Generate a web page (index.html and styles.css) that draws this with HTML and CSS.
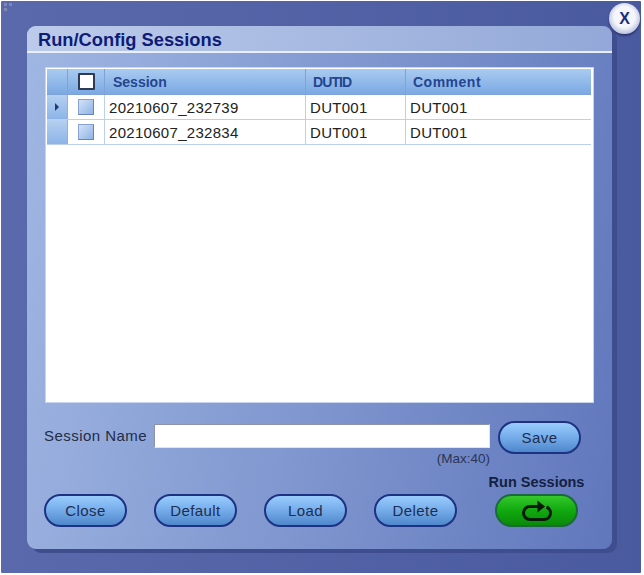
FILE: index.html
```html
<!DOCTYPE html>
<html lang="en">
<head>
<meta charset="utf-8">
<title>Run/Config Sessions</title>
<link rel="stylesheet" href="styles.css">
</head>
<body>
<div class="window">
  <svg class="grip" width="12" height="10" viewBox="0 0 12 10"><path d="M1 1h3v3H1zM6 1h3v3H6zM1 6h3v3H1z" fill="#7f88b4"/></svg>
  <button class="close-x">X</button>
  <section class="panel">
    <h1 class="title">Run/Config Sessions</h1>
    <div class="content">
      <div class="grid-box">
        <div class="row head">
          <div class="cell rowhead"></div>
          <div class="cell check"><span class="box"></span></div>
          <div class="cell session">Session</div>
          <div class="cell dutid">DUTID</div>
          <div class="cell comment">Comment</div>
        </div>
        <div class="row">
          <div class="cell rowhead"><svg width="6" height="8" viewBox="0 0 6 8"><path d="M1 0l4 4-4 4z" fill="#1f3a78"/></svg></div>
          <div class="cell check"><span class="tick"></span></div>
          <div class="cell session">20210607_232739</div>
          <div class="cell dutid">DUT001</div>
          <div class="cell comment">DUT001</div>
        </div>
        <div class="row">
          <div class="cell rowhead"></div>
          <div class="cell check"><span class="tick"></span></div>
          <div class="cell session">20210607_232834</div>
          <div class="cell dutid">DUT001</div>
          <div class="cell comment">DUT001</div>
        </div>
      </div>
      <div class="name-row">
        <label class="name-label" for="session-name">Session Name</label>
        <div class="name-field">
          <input class="name-input" id="session-name" type="text">
          <span class="max">(Max:40)</span>
        </div>
        <button class="pill save">Save</button>
      </div>
      <div class="actions">
        <button class="pill">Close</button>
        <button class="pill">Default</button>
        <button class="pill">Load</button>
        <button class="pill">Delete</button>
        <div class="run">
          <span class="run-label">Run Sessions</span>
          <button class="pill green" aria-label="Run Sessions">
            <svg width="32" height="21" viewBox="0 0 32 21"><path d="M17 6.5H9a6.5 6.5 0 0 0 0 13h14a6.5 6.5 0 0 0 2.5-12.5" fill="none" stroke="#071a07" stroke-width="3"/><path d="M16.5 0.5l7.5 6-7.5 6z" fill="#071a07"/></svg>
          </button>
        </div>
      </div>
    </div>
  </section>
</div>
</body>
</html>
```
FILE: styles.css
```css
* { box-sizing: border-box; }
html, body { margin: 0; height: 100%; background: #fff; }
body { font-family: "Liberation Sans", Arial, sans-serif; padding: 1px 2px 2px 1px; }
.window {
  position: relative;
  width: 640px;
  height: 572px;
  padding: 25px 0 0 26px;
  background: linear-gradient(90deg, #5a69ab, #4a5a9f);
  border-radius: 1px;
}
.grip { position: absolute; left: 2px; top: 1px; }
.close-x {
  position: absolute;
  right: 1px;
  top: 2px;
  width: 31px;
  height: 31px;
  padding: 0;
  border: 0;
  border-radius: 50%;
  font: bold 16px "Liberation Sans", sans-serif;
  color: #1c2d7c;
  background: radial-gradient(circle at 50% 45%, #f4f6fb 0 45%, #c5cde4 68%, #8e97bd 100%);
  box-shadow: 0 2px 2px #2c3873;
}
.panel {
  width: 585px;
  height: 523px;
  border-radius: 9px;
  background: linear-gradient(100deg, #a0b7e3, #6077bc);
  box-shadow: 5px 4px 0 #3e4d8e;
}
.title {
  margin: 0;
  height: 27px;
  padding: 3px 0 0 11px;
  font-size: 18.3px;
  line-height: 22px;
  font-weight: bold;
  color: #0e1c78;
  background: linear-gradient(100deg, #bccbeb, #93a8d8);
  border-bottom: 2px solid #e9effa;
  border-radius: 9px 9px 0 0;
}
.content { padding: 14px 19px 0 17px; }
.grid-box {
  width: 549px;
  height: 336px;
  margin-left: 1px;
  padding: 1px 2px 0 1px;
  background: #fff;
  border: 1px solid #c7d5ee;
}
.row {
  display: grid;
  grid-template-columns: 21px 37px 201px 100px 186px;
  height: 25px;
  border-bottom: 1px solid #bcd0ec;
  font-size: 15px;
  letter-spacing: .3px;
  color: #222;
}
.head {
  height: 26px;
  font-weight: bold;
  font-size: 14px;
  letter-spacing: 0;
  color: #24458f;
  background: linear-gradient(#a9cbf0, #7ba9e3);
  border-bottom: 1px solid #7fa3d6;
}
.cell {
  display: flex;
  align-items: center;
  padding-left: 4px;
  border-right: 1px solid #bcd0ec;
}
.head .cell { border-right-color: #7fa3d6; }
.session { padding-left: 4px; }
.head .session { padding-left: 8px; }
.head .dutid { padding-left: 7px; letter-spacing: -.9px; }
.head .comment { padding-left: 7px; letter-spacing: .5px; }
.comment { border-right: 0; }
.rowhead {
  justify-content: center;
  padding: 0;
  background: linear-gradient(#b5d0f1, #8db4e8);
  border-right-color: #90b0dc;
}
.head .rowhead { background: none; }
.check { justify-content: center; padding: 0; }
.box {
  width: 17px;
  height: 17px;
  background: #fff;
  border: 2px solid #2f3a55;
  border-radius: 1px;
}
.tick {
  width: 16px;
  height: 16px;
  background: linear-gradient(135deg, #d3e2f6, #8fb4e6);
  border: 1px solid #87a3cf;
  border-bottom-color: #6b83b5;
  border-right-color: #6b83b5;
}
.name-row {
  display: flex;
  align-items: flex-start;
  margin-top: 18px;
}
.name-label {
  width: 110px;
  padding-top: 6px;
  font-size: 15px;
  letter-spacing: .45px;
  line-height: 17px;
  white-space: nowrap;
  color: #232c46;
}
.name-field {
  display: flex;
  flex-direction: column;
  align-items: flex-end;
  width: 336px;
  margin-top: 3px;
}
.name-input {
  width: 336px;
  height: 24px;
  background: #fff;
  border: 1px solid #8d93a8;
  border-right-color: #dfe4f2;
  border-bottom-color: #dfe4f2;
}
.max {
  margin-top: 4px;
  font-size: 13.5px;
  line-height: 14px;
  color: #2b3556;
}
.pill {
  width: 83px;
  height: 33px;
  padding: 0;
  font: 15px "Liberation Sans", sans-serif;
  letter-spacing: .4px;
  color: #1f2d4f;
  border: 2px solid #1d3283;
  border-radius: 17px;
  background: linear-gradient(#9accfb 0, #7fb6f1 35%, #4f87cc 100%);
}
.save { margin-left: 8px; }
.actions {
  display: flex;
  align-items: flex-end;
  gap: 27px;
  margin-top: 9px;
}
.run {
  display: flex;
  flex-direction: column;
  align-items: center;
  width: 97px;
  margin-left: 4px;
}
.run-label {
  margin-bottom: 4px;
  font-size: 14.5px;
  line-height: 15px;
  font-weight: bold;
  white-space: nowrap;
  color: #14203f;
}
.green {
  display: flex;
  align-items: center;
  justify-content: center;
  border-color: #1a6a3a;
  background: linear-gradient(#35c82a, #10a90f 50%, #0a8a0a);
}
```
